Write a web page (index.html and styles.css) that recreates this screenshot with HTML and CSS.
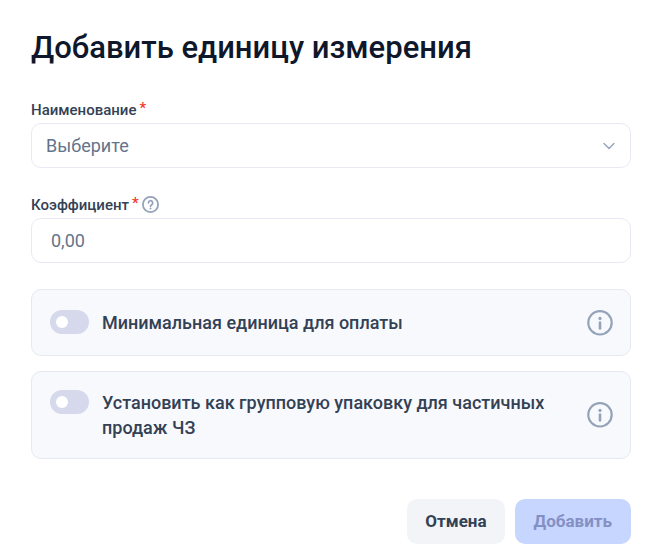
FILE: index.html
```html
<!DOCTYPE html>
<html lang="ru">
<head>
<meta charset="UTF-8">
<meta name="viewport" content="width=device-width, initial-scale=1.0">
<title>Добавить единицу измерения</title>
<link rel="stylesheet" href="styles.css">
</head>
<body>
<form class="dialog">
  <h1>Добавить единицу измерения</h1>

  <div class="field">
    <div class="field-label">
      <label for="unit">Наименование</label>
      <span class="required">*</span>
    </div>
    <div class="select-wrap">
      <select id="unit" class="control select">
        <option value="">Выберите</option>
      </select>
      <svg class="chevron" width="14" height="14" viewBox="0 0 14 14" fill="none">
        <path d="M2 4.5l5 5 5-5" stroke="currentColor" stroke-width="1.4" stroke-linecap="round" stroke-linejoin="round"/>
      </svg>
    </div>
  </div>

  <div class="field">
    <div class="field-label">
      <label for="ratio">Коэффициент</label>
      <span class="required">*</span>
      <svg class="help" width="18" height="18" viewBox="0 0 18 18" fill="none" stroke="currentColor" stroke-linecap="round" stroke-linejoin="round">
        <circle cx="8.5" cy="8.5" r="7.6" stroke-width="1.8"/>
        <path d="M6.4 7a2.15 2.15 0 1 1 3.3 1.7c-.8.5-1.2.8-1.2 1.5" stroke-width="1.7"/>
        <circle cx="8.5" cy="12.4" r="1" fill="currentColor" stroke="none"/>
      </svg>
    </div>
    <input type="text" id="ratio" class="control" placeholder="0,00">
  </div>

  <div class="options">
    <div class="option">
      <label class="option-label">
        <input type="checkbox" class="toggle">
        <span>Минимальная единица для оплаты</span>
      </label>
      <svg class="info" width="26" height="26" viewBox="0 0 26 26" fill="none">
        <circle cx="13" cy="12.8" r="11.7" stroke="currentColor" stroke-width="2.2"/>
        <circle cx="13" cy="8.4" r="1.6" fill="currentColor"/>
        <path d="M13 12.5v6" stroke="currentColor" stroke-width="2.6" stroke-linecap="round"/>
      </svg>
    </div>
    <div class="option">
      <label class="option-label">
        <input type="checkbox" class="toggle">
        <span>Установить как групповую упаковку для частичных продаж ЧЗ</span>
      </label>
      <svg class="info" width="26" height="26" viewBox="0 0 26 26" fill="none">
        <circle cx="13" cy="12.8" r="11.7" stroke="currentColor" stroke-width="2.2"/>
        <circle cx="13" cy="8.4" r="1.6" fill="currentColor"/>
        <path d="M13 12.5v6" stroke="currentColor" stroke-width="2.6" stroke-linecap="round"/>
      </svg>
    </div>
  </div>

  <div class="actions">
    <button type="button" class="btn">Отмена</button>
    <button type="submit" class="btn btn-primary" disabled>Добавить</button>
  </div>
</form>
</body>
</html>
```

FILE: styles.css
```css
* {
  box-sizing: border-box;
}

body {
  margin: 0;
  font-family: Roboto, "Liberation Sans", sans-serif;
  background: #fff;
  color: #334155;
}

.dialog {
  padding: 30px 29px 15px 31px;
}

h1 {
  margin: 0 0 33px;
  font-size: 31px;
  line-height: 36px;
  font-weight: 500;
  color: #0f172a;
}

.field {
  margin-bottom: 26px;
}

.field-label {
  display: flex;
  align-items: center;
  gap: 3px;
  height: 21px;
  margin-bottom: 3px;
  font-size: 15px;
  line-height: 20px;
  font-weight: 500;
}

.required {
  align-self: flex-start;
  line-height: 18px;
  color: #ef3a2d;
}

.help,
.info {
  flex: none;
  color: #94a3b8;
}

.control {
  display: block;
  width: 100%;
  height: 45px;
  padding: 0 19px;
  border: 1px solid #e9e9f5;
  border-radius: 10px;
  outline: none;
  background: #fff;
  font-family: inherit;
  font-size: 18px;
  color: #64748b;
}

.control::placeholder {
  color: #64748b;
}

.control:focus {
  border-color: #a5b8f5;
}

.select-wrap {
  position: relative;
}

.select {
  appearance: none;
  padding: 0 40px 0 14px;
}

.chevron {
  position: absolute;
  top: 16px;
  right: 15px;
  color: #94a3b8;
  pointer-events: none;
}

.options {
  display: grid;
  gap: 15px;
  margin-bottom: 40px;
}

.option {
  display: flex;
  align-items: center;
  justify-content: space-between;
  gap: 24px;
  min-height: 67px;
  padding: 18px 17px 18px 18px;
  border: 1px solid #e6e9f2;
  border-radius: 10px;
  background: #f8f9fd;
}

.option-label {
  display: flex;
  align-items: flex-start;
  gap: 13px;
  font-size: 18px;
  line-height: 25px;
  font-weight: 500;
  cursor: pointer;
}

.toggle {
  appearance: none;
  flex: none;
  display: flex;
  align-items: center;
  width: 39px;
  height: 24px;
  margin: 0;
  padding: 0 6px;
  border-radius: 12px;
  background: #d6d9eb;
  cursor: pointer;
}

.toggle::before {
  content: "";
  width: 12px;
  height: 12px;
  border-radius: 50%;
  background: #fff;
}

.toggle:checked {
  justify-content: flex-end;
  background: #5b7cf7;
}

.actions {
  display: flex;
  justify-content: flex-end;
  gap: 10px;
}

.btn {
  height: 45px;
  padding: 0 18px 2px;
  border: none;
  border-radius: 10px;
  background: #f2f4f8;
  font-family: inherit;
  font-size: 17px;
  font-weight: 700;
  color: #334155;
  cursor: pointer;
}

.btn-primary {
  padding: 0 19px 2px;
  background: #c7d6fe;
  color: #8490c4;
}

.btn:disabled {
  cursor: default;
}
```
